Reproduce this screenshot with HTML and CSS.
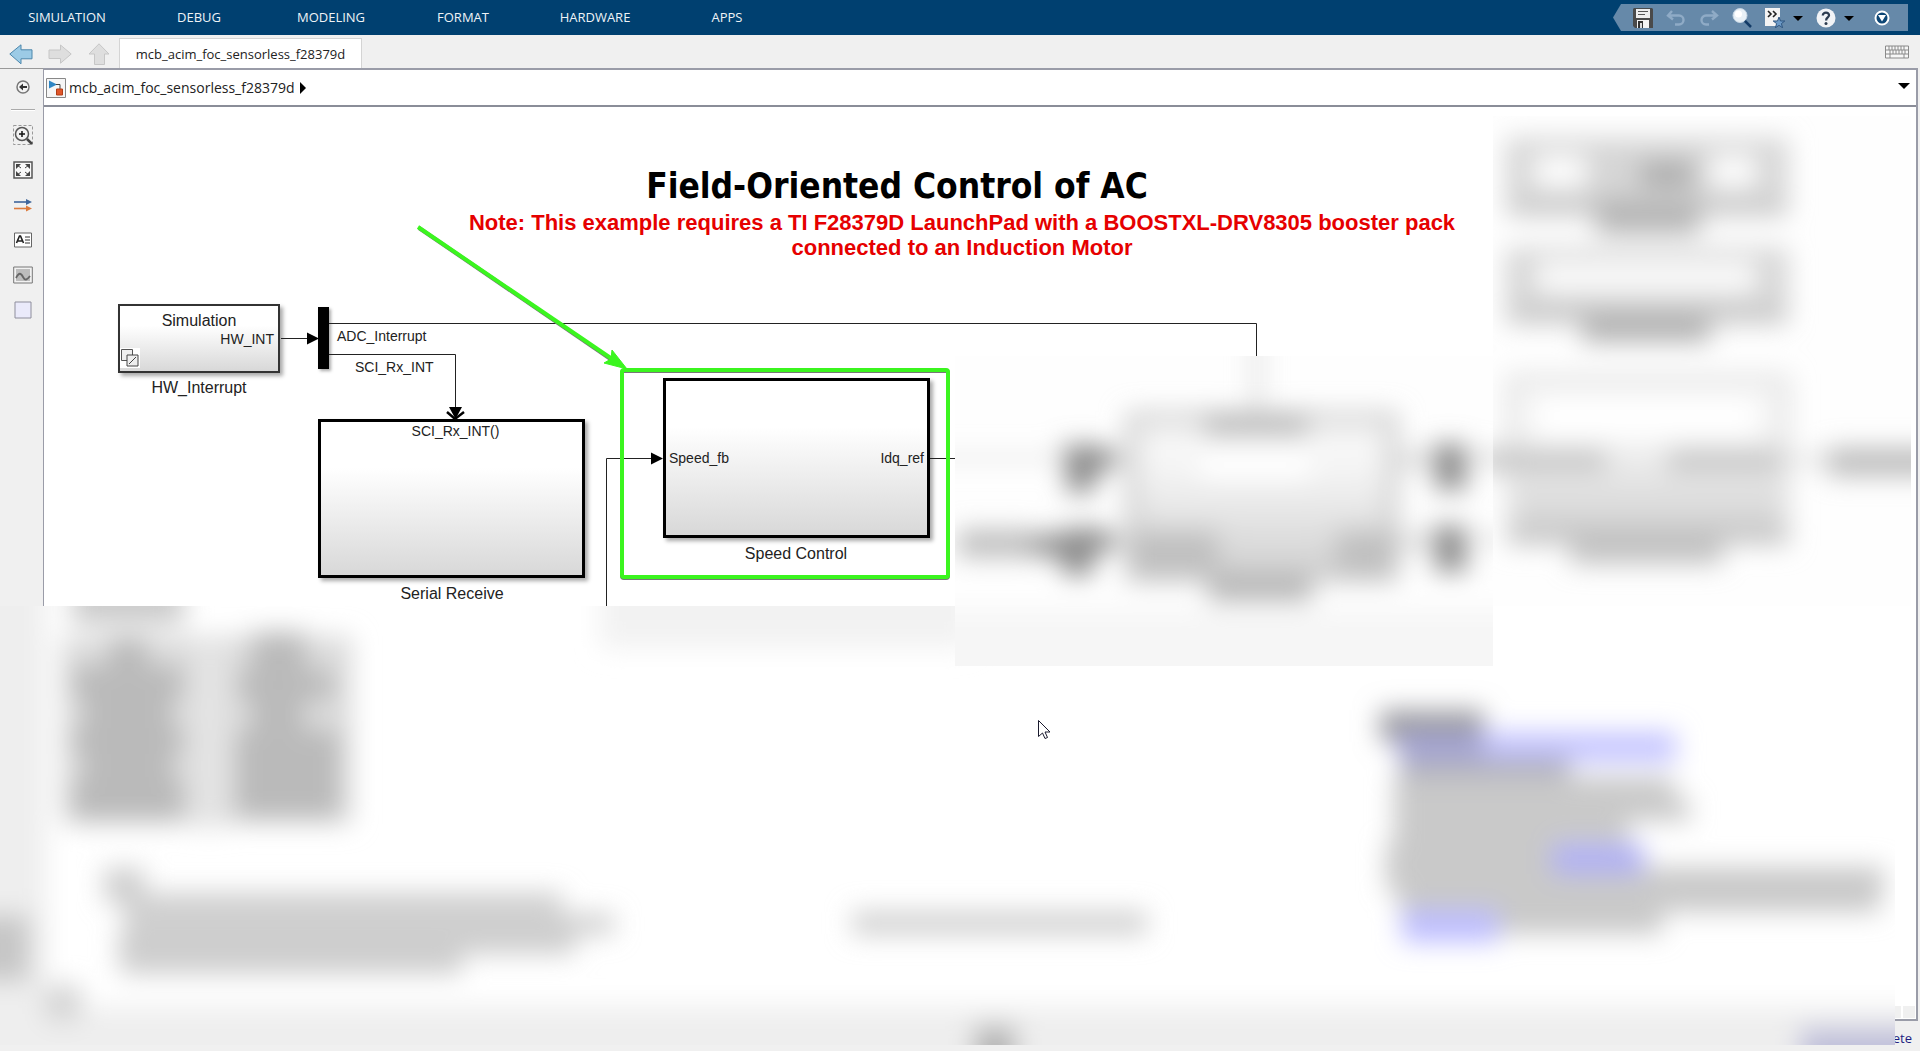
FILE: index.html
```html
<!DOCTYPE html>
<html lang="en">
<head>
<meta charset="utf-8">
<title>mcb_acim_foc_sensorless_f28379d</title>
<link rel="stylesheet" href="styles.css">
</head>
<body>
<div class="app">
  <header class="ribbon">
    <nav class="ribbon-tabs">
      <button>SIMULATION</button>
      <button>DEBUG</button>
      <button>MODELING</button>
      <button>FORMAT</button>
      <button>HARDWARE</button>
      <button>APPS</button>
    </nav>
    <div class="quick">
      <button aria-label="Save"><svg width="20" height="20" viewBox="0 0 20 20"><path d="M1 0h18l1 1v19H2l-2-2V1z" fill="#4a4a4a"/><path d="M3 1h14v9H3z" fill="#eee"/><path d="M5 3h10v1H5zM5 6h7v1H5z" fill="#555"/><path d="M4 12h12v8H4z" fill="#f4f4f4"/><path d="M5 13h5v7H5z" fill="#333"/><path d="M7 15h2v5H7z" fill="#ddd"/></svg></button>
      <button aria-label="Undo"><svg width="20" height="20" viewBox="0 0 20 20"><path d="M6 3 2 7.500l5 4M3 7.500h10a4 4 0 0 1 0 9H9" fill="none" stroke="#8fabc6" stroke-width="2.400"/></svg></button>
      <button aria-label="Redo"><svg width="20" height="20" viewBox="0 0 20 20"><path d="m13 3 5 4.500-5 4M17 7.500H7a4 4 0 0 0 0 9h3" fill="none" stroke="#8fabc6" stroke-width="2.400"/></svg></button>
      <button aria-label="Find"><svg width="20" height="20" viewBox="0 0 20 20"><path d="m12 12 7 7" stroke="#123a66" stroke-width="2.500"/><circle cx="8" cy="7.500" r="7" fill="#e8f0f6" stroke="#c4d4e2"/><circle cx="6.500" cy="6" r="3.500" fill="#fff"/></svg></button>
      <div class="pair">
        <button aria-label="Favorites"><svg width="20" height="20" viewBox="0 0 20 20"><path d="M0 0h15v18H0z" fill="#f4f4f4"/><path d="m3 3 3 3-3 3M8 3l3 3-3 3" fill="none" stroke="#222" stroke-width="1.600"/><path d="m14 9 1.500 4h4.300l-3.400 2.600 1.200 4.200-3.600-2.500-3.600 2.500 1.200-4.200L8.200 13h4.300z" fill="#6d9bc8" stroke="#2f5680"/></svg></button>
        <button aria-label="Favorites menu"><svg width="10" height="20" viewBox="0 0 10 20"><path d="M0 8h10l-5 5z"/></svg></button>
      </div>
      <div class="pair">
        <button aria-label="Help"><svg width="20" height="20" viewBox="0 0 20 20"><circle cx="10" cy="10" r="9.500" fill="#f1f3f6"/><path d="M6.800 7.500C6.800 3.500 13.400 3.800 13 7.500c-.2 2-2.900 2-2.900 5" fill="none" stroke="#2d3c50" stroke-width="2.300"/><circle cx="10" cy="15.500" r="1.500" fill="#2d3c50"/></svg></button>
        <button aria-label="Help menu"><svg width="10" height="20" viewBox="0 0 10 20"><path d="M0 8h10l-5 5z"/></svg></button>
      </div>
      <button class="more" aria-label="Minimize"><svg width="16" height="20" viewBox="0 0 16 20"><circle cx="8" cy="10" r="6.500" fill="#0d4675" stroke="#fff" stroke-width="2"/><path d="M4 7h8l-4 6.500z" fill="#fff"/></svg></button>
    </div>
  </header>

  <div class="docbar">
    <div class="history">
      <button aria-label="Back"><svg width="24" height="20" viewBox="0 0 24 20"><path d="M.8 10 12 .8v5h11v9H12v5z" fill="#9ccbe6" stroke="#4d87ac"/></svg></button>
      <button aria-label="Forward"><svg width="24" height="20" viewBox="0 0 24 20"><path d="M23.200 10 12.500 1v5H1v8.500h11.500v4.700z" fill="#dedede" stroke="#c6c6c6"/></svg></button>
      <button aria-label="Up"><svg width="24" height="22" viewBox="0 0 24 22"><path d="M12 .8 22 11h-4.500v10.500h-10V11H2z" fill="#dedede" stroke="#c6c6c6"/></svg></button>
    </div>
    <button class="doctab">mcb_acim_foc_sensorless_f28379d</button>
    <button class="keyboard" aria-label="Keyboard"><svg width="24" height="14" viewBox="0 0 24 14"><path d="M.5 1h23v12H.5z" fill="#f7f7f7" stroke="#8a8a8a"/><path d="M1 5h22M1 9h22M4 1v4M7 1v4M10 1v4M13 1v4M16 1v4M19 1v4M5 5v4M8 5v4M11 5v4M14 5v4M17 5v4M20 5v4M5 9v4M19 9v4" stroke="#8a8a8a" fill="none"/></svg></button>
  </div>

  <div class="workspace">
    <aside class="palette">
      <button aria-label="Hide browser"><svg width="20" height="20" viewBox="0 0 20 20"><circle cx="10" cy="10" r="6" fill="#f4f4f4" stroke="#777" stroke-width="1.500"/><path d="m6 10 4-3.500V9h4v2h-4v2.500z" fill="#333"/></svg></button>
      <hr>
      <button aria-label="Zoom"><svg width="20" height="20" viewBox="0 0 20 20"><path d="M.5.500h19v19H.5z" fill="none" stroke="#999" stroke-dasharray="3 2"/><circle cx="9" cy="9" r="6.500" fill="#f2f2f2" stroke="#555" stroke-width="1.500"/><path d="m14 14 5 5" stroke="#444" stroke-width="2.500"/><path d="M6 9h6M9 6v6" stroke="#111" stroke-width="1.500"/></svg></button>
      <button aria-label="Fit to view"><svg width="20" height="20" viewBox="0 0 20 20"><path d="M1 2h18v16H1z" fill="#f8f8f8" stroke="#555" stroke-width="1.500"/><path d="M3 4h5L3 9zM17 4h-5l5 5zM3 16h5l-5-5zM17 16h-5l5-5z" fill="#444"/><path d="m4 5 4 3M16 5l-4 3M4 15l4-3M16 15l-4-3" stroke="#444"/></svg></button>
      <button aria-label="Sample time"><svg width="20" height="20" viewBox="0 0 20 20"><path d="M1 7h14" stroke="#3f659b" stroke-width="1.600"/><path d="m13 4 6 3-6 3z" fill="#3f659b"/><path d="M1 13.500h14" stroke="#dc7a3c" stroke-width="1.600"/><path d="m13 10.500 6 3-6 3z" fill="#dc7a3c"/></svg></button>
      <button aria-label="Annotation"><svg width="20" height="20" viewBox="0 0 20 20"><path d="M1.500 3h17v14h-17z" fill="#fff" stroke="#666"/><path d="m3.500 13 3-7h1l3 7M5 11h4" stroke="#222" stroke-width="1.600" fill="none"/><path d="M12 7h5M12 10h5M12 13h5" stroke="#333"/></svg></button>
      <button aria-label="Image"><svg width="20" height="20" viewBox="0 0 20 20"><path d="M.7 2h18.600v16H.7z" fill="#f2f2f2" stroke="#777"/><path d="M3 4h14v12H3z" fill="#bdbdbd"/><path d="M3 13c3-6 5-5 7-1s4 3 7-1" stroke="#666" stroke-width="1.800" fill="none"/></svg></button>
      <button aria-label="Area"><svg width="20" height="20" viewBox="0 0 20 20"><path d="M2 2h16v16H2z" fill="#eaeafa" stroke="#8e8e9c"/></svg></button>
    </aside>

    <main class="editor">
      <div class="crumbs">
        <svg width="20" height="20" viewBox="0 0 20 20"><path d="M.5.500h19v19H.5z" fill="#f6f6f6" stroke="#888"/><path d="m3 2.500 8 4-8 4z" fill="#2f86c4"/><path d="M10 6.500h4V11" stroke="#444" fill="none"/><path d="M10.500 11h6v6h-6z" fill="#e0562a" stroke="#b23c15"/></svg>
        <a href="#model">mcb_acim_foc_sensorless_f28379d</a>
        <svg width="6" height="12" viewBox="0 0 6 12"><path d="m0 0 6 6-6 6z"/></svg>
        <button class="crumb-menu" aria-label="Path menu"><svg width="12" height="6" viewBox="0 0 12 6"><path d="M0 0h12L6 6z"/></svg></button>
      </div>

      <div class="canvas" id="model">
        <h1 class="model-title">Field-Oriented Control of AC</h1>
        <p class="model-note">Note: This example requires a TI F28379D LaunchPad with a BOOSTXL-DRV8305 booster pack<br>connected to an Induction Motor</p>

        <div class="block hw"><span class="port-text mask">Simulation</span><span class="port-text out">HW_INT</span>
          <svg width="20" height="20" viewBox="0 0 20 20"><path d="M0 0h20v20H0z" fill="#fff"/><path d="M1.500 1.500h11v11h-11z" fill="#eee" stroke="#555"/><path d="M7 7h11v11H7z" fill="#eee" stroke="#444"/><path d="m9 16 7-7" stroke="#444"/></svg>
        </div>
        <span class="caption hw-name">HW_Interrupt</span>
        <div class="mux"></div>
        <span class="signal adc">ADC_Interrupt</span>
        <span class="signal sci">SCI_Rx_INT</span>
        <div class="block subsystem serial"><span class="trigger">SCI_Rx_INT()</span></div>
        <span class="caption serial-name">Serial Receive</span>
        <div class="block subsystem speed"><span>Speed_fb</span><span>Idq_ref</span></div>
        <span class="caption speed-name">Speed Control</span>

        <svg class="wires" width="1460" height="500" viewBox="44 107 1460 500">
          <g fill="none" stroke="#222">
            <path d="M281 338.500h28M329 323.500h927.500V356M329 354.500h126.500V410M606.500 606V458.500H653M930 458.500h25"/>
          </g>
          <path d="m307 332.500 12 6-12 6zM449 407h13l-6.500 12zM651 452.500l12 6-12 6z"/>
          <path d="m447 412 8 7 9-7" fill="none" stroke="#000" stroke-width="2.500"/>
          <rect x="622" y="371" width="326" height="207" rx="2" fill="none" stroke="#777" stroke-width="4"/>
          <rect x="622" y="370" width="326" height="207" rx="2" fill="none" stroke="#3bf51f" stroke-width="4"/>
          <path d="M419 228 615 362" stroke="#777" stroke-width="4"/>
          <path d="M418 227 615 361" stroke="#3bf51f" stroke-width="4"/>
          <path d="m627 369-23-6 7-4 1-9z" fill="#3bf51f" stroke="#3bf51f"/>
        </svg>
        <div class="scroll-corner"></div>
      </div>
    </main>
  </div>
  <footer class="status"><span>ete</span></footer>

  <!-- obscured lower part of the window -->
  <svg class="veil veil-bottom" width="1895" height="439" viewBox="0 606 1895 439">
    <defs><filter id="soft" filterUnits="userSpaceOnUse" x="-60" y="0" width="2040" height="1120"><feGaussianBlur stdDeviation="13"/></filter></defs>
    <rect y="606" width="1895" height="439" fill="#fff"/>
    <g filter="url(#soft)">
      <path d="M-60 500H46V1007H1980V1120H-60z" fill="#eee"/>
      <path d="M600 570h370v78H600z" fill="#f2f2f2"/>
      <path d="M72 580h112v44H72z" fill="#cbcbcb"/>
      <path d="M62 636h290v188H62z" fill="#dcdcdc"/>
      <path d="M108 636h40v30h-40zM72 666h112v32H72zM84 698h88v30H84zM72 728h112v26H72zM84 754h88v24H84zM72 778h112v42H72zM252 632h54v38h-54zM238 670h96v30h-96zM252 700h52v30h-52zM236 730h104v88H236z" fill="#bababa"/>
      <path d="M192 640h34v188h-34z" fill="#e4e4e4"/>
      <path d="M104 868h40v34h-40zM122 893h440v20H122zM124 914h490v20H124zM118 934h457v20H118zM120 954h342v20H120z" fill="#cecece"/>
      <path d="M-30 915h60v66H-30z" fill="#c6c6c6"/><path d="M45 985h36v36H45z" fill="#d4d4d4"/>
      <path d="M852 911h295v24H852z" fill="#d2d2d2"/>
      <path d="M974 1026h42v60h-42z" fill="#b4b4b4"/>
      <path d="M1380 710h104v32h-104z" fill="#9c9ca2"/>
      <path d="M1398 736h86v22h-86z" fill="#a4a4da"/><path d="M1484 732h192v30h-192z" fill="#c4c4ff"/>
      <path d="M1400 757h170v20h-170z" fill="#b0b0be"/>
      <path d="M1394 777h280v22h-280zM1394 799h296v22h-296zM1394 821h234v22h-234zM1386 843h166v24h-166zM1386 867h498v24h-498zM1398 890h482v22h-482zM1498 912h164v22h-164z" fill="#c9c9c9"/>
      <path d="M1552 844h92v30h-92z" fill="#b0b0f4"/><path d="M1402 910h96v32h-96z" fill="#bdbdff"/>
      <path d="M1800 1028h180v60h-180z" fill="#c0c0da"/>
    </g>
  </svg>
  <!-- obscured controller block -->
  <svg class="veil veil-controller" width="538" height="310" viewBox="955 356 538 310">
    <defs><linearGradient id="fill" x2="0" y2="1"><stop offset=".3" stop-color="#f6f6f6"/><stop offset="1" stop-color="#d0d0d0"/></linearGradient></defs>
    <rect x="955" y="356" width="538" height="310" fill="#fefefe"/>
    <g filter="url(#soft)">
      <path d="M900 610h640v90H900z" fill="#f6f6f6"/>
      <path d="M1254 300h6v110h-6z" fill="#c8c8c8"/>
      <path d="M900 455h170v6H900z" fill="#dedede"/>
      <rect x="1132" y="418" width="260" height="158" fill="url(#fill)" stroke="#cacaca" stroke-width="12"/>
      <path d="M1204 412h104v24h-104zM1208 574h104v28h-104z" fill="#b8b8b8"/>
      <path d="M1200 450h110v30h-110z" fill="#fff"/>
      <path d="M1130 530h88v46h-88zM1336 530h60v46h-60z" fill="#c0c0c0"/>
      <path d="M958 530h74v27h-74z" fill="#bcbcbc"/>
      <path d="M1062 445h34l24 8v12l-22 6-6 22h-24zM1032 534h30l4-6h30l24 8v12l-24 4-6 24h-24l-8-20h-26zM1432 444h34v46h-30zM1432 526h34v46h-30z" fill="#8c8c8c"/>
      <path d="M1396 452h36v16h-36zM1396 534h36v16h-36zM1466 452h60v12h-60zM1466 535h60v8h-60z" fill="#d8d8d8"/>
    </g>
  </svg>
  <!-- obscured right-hand blocks -->
  <svg class="veil veil-plant" width="418" height="500" viewBox="1493 116 418 500">
    <rect x="1493" y="116" width="418" height="490" fill="#fefefe"/>
    <g filter="url(#soft)">
      <path d="M1506 138h282v78h-282z" fill="#d6d6d6"/><path d="M1534 156h52v30h-52zM1710 156h46v30h-46z" fill="#fff"/>
      <path d="M1510 203h276v12h-276z" fill="#c4c4c4"/>
      <path d="M1640 162h54v24h-54z" fill="#a8a8a8"/><path d="M1596 198h104v36h-104z" fill="#b6b6b6"/>
      <path d="M1506 248h282v76h-282z" fill="#d6d6d6"/><path d="M1536 262h220v30h-220z" fill="#fcfcfc"/>
      <path d="M1510 308h276v14h-276z" fill="#c4c4c4"/><path d="M1582 314h128v28h-128z" fill="#b2b2b2"/>
      <rect x="1512" y="380" width="272" height="160" fill="url(#fill)" stroke="#e2e2e2" stroke-width="12"/>
      <path d="M1536 396h220v44h-220z" fill="#fff"/>
      <path d="M1480 448h126v24h-126zM1668 448h110v24h-110z" fill="#c8c8c8"/>
      <path d="M1508 526h280v16h-280zM1570 534h152v30h-152z" fill="#c2c2c2"/>
      <path d="M1780 457h50v6h-50z" fill="#ccc"/><path d="M1828 448h120v28h-120z" fill="#bcbcbc"/>
    </g>
  </svg>
  <svg class="pointer" width="13" height="20" viewBox="0 0 13 20"><path d="M.5.500v16l4-3.500 2.500 5.500 2.500-1-2.500-5.500h5z" fill="#fff" stroke="#1a1a2e"/></svg>
</div>
</body>
</html>
```
FILE: styles.css
```css
* { box-sizing: border-box; }
body { margin: 0; background: #f0f0f0; font-family: "Open Sans", "Noto Sans", sans-serif; font-size: 13px; color: #222; }
button { padding: 0; border: 0; background: none; font: inherit; color: inherit; }
svg { display: block; }

.app { position: relative; display: flex; flex-direction: column; min-height: 100vh; overflow: hidden; }

.ribbon { display: flex; justify-content: space-between; align-items: center; height: 35px; padding: 0 12px 0 1px; background: #004070; }
.ribbon-tabs { display: flex; }
.ribbon-tabs button { width: 132px; height: 35px; padding-bottom: 2px; color: #eef3f7; }
.quick { display: flex; align-items: center; gap: 13px; height: 27px; padding: 0 11px 0 20px; background: #6689a9; clip-path: polygon(8px 0, 100% 0, 100% 100%, 8px 100%, 0 50%); }
.pair { display: flex; gap: 8px; }
.more { display: flex; justify-content: center; width: 30px; }

.docbar { display: flex; align-items: center; height: 33px; padding-right: 11px; }
.history { display: flex; gap: 15px; align-items: center; width: 119px; padding: 4px 0 0 9px; }
.doctab { align-self: flex-end; width: 243px; height: 30px; border: 1px solid #d4d4d4; border-bottom: 0; background: #fff; }
.keyboard { margin-left: auto; }

.workspace { display: flex; flex: 1; padding-right: 2px; }
.palette { display: flex; flex-direction: column; align-items: center; gap: 15px; width: 43px; padding: 8px 0 0 2px; border-top: 1px solid #999; }
.palette hr { width: 24px; height: 2px; margin: -3px 0 -1px; border: 0; border-top: 1px solid #aaa; border-bottom: 1px solid #fff; }
.editor { display: flex; flex: 1; flex-direction: column; border: solid #9a9ca8; border-width: 2px 2px 2px 1px; background: #fff; }
.crumbs { display: flex; align-items: center; gap: 3px; height: 37px; padding: 0 6px 0 2px; border-bottom: 2px solid #8a8d98; font-size: 14px; }
.crumbs a { margin-right: 2px; color: #222; text-decoration: none; }
.crumb-menu { margin: -4px 0 0 auto; }

.canvas { position: relative; flex: 1; font-family: "Liberation Sans", Arial, sans-serif; font-size: 14px; line-height: 16px; }
.model-title, .model-note, .caption, .signal, .block, .mux, .wires { position: absolute; margin: 0; white-space: nowrap; }
.model-title { left: 553px; top: 57px; width: 600px; font: bold 35px/44px "DejaVu Sans Condensed", "Noto Sans", sans-serif; color: #000; text-align: center; }
.model-note { left: 318px; top: 103px; width: 1200px; font-size: 22px; line-height: 25px; font-weight: bold; color: #e60000; text-align: center; }
.block { background: linear-gradient(#fff 30%, #d8d8d8); border: 2px solid #333; box-shadow: 3px 3px 4px #aaa; }
.subsystem { border: 3px solid #000; }
.caption { width: 160px; font-size: 16px; line-height: 20px; text-align: center; }
.hw { left: 74px; top: 197px; width: 162px; height: 69px; display: flex; flex-direction: column; padding: 6px 4px 0; }
.hw .mask { align-self: center; font-size: 16px; line-height: 18px; }
.hw .out { align-self: flex-end; line-height: 18px; }
.hw svg { margin: 0 0 0 -4px; }
.hw-name { left: 75px; top: 271px; }
.mux { left: 274px; top: 200px; width: 11px; height: 62px; background: #000; box-shadow: 2px 2px 3px #aaa; }
.adc { left: 293px; top: 221px; }
.sci { left: 311px; top: 252px; }
.serial { left: 274px; top: 312px; width: 267px; height: 159px; padding-top: 1px; }
.trigger { display: block; margin-left: 8px; text-align: center; }
.serial-name { left: 328px; top: 477px; }
.speed { left: 619px; top: 271px; width: 267px; height: 160px; display: flex; justify-content: space-between; align-items: center; padding: 0 3px; }
.speed-name { left: 672px; top: 437px; }
.wires { left: 0; top: 0; }
.scroll-corner { position: absolute; right: 1px; bottom: 1px; width: 20px; height: 12px; background: linear-gradient(90deg, #f0f0f0 6px, #fff 6px, #fff 8px, #f0f0f0 8px); }

.status { height: 30px; padding: 8px 8px 0; color: #1c1c80; text-align: right; line-height: 18px; }

.veil { position: absolute; }
.veil-bottom { left: 0; top: 606px; }
.veil-controller { left: 955px; top: 356px; }
.veil-plant { left: 1493px; top: 116px; }
.pointer { position: absolute; left: 1038px; top: 720px; }
```
